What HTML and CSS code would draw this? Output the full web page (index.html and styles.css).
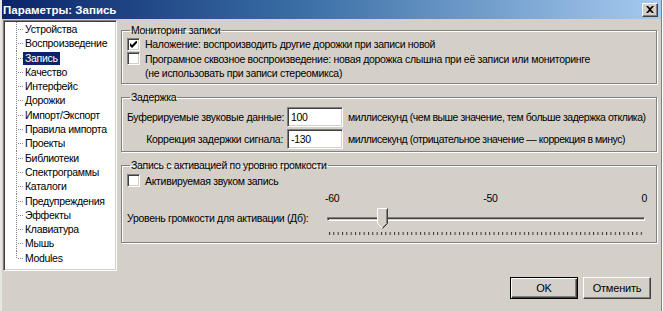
FILE: index.html
```html
<!DOCTYPE html>
<html lang="ru">
<head>
<meta charset="utf-8">
<title>Параметры: Запись</title>
<link rel="stylesheet" href="styles.css">
</head>
<body>
<div class="window">
  <div class="titlebar">
    <span class="title">Параметры: Запись</span>
    <span class="close">
      <svg width="8" height="7" viewBox="0 0 8 7"><path d="M0 0h2l2 2 2-2h2L5 3.5 8 7H6L4 5 2 7H0l3-3.5z" fill="#000"/></svg>
    </span>
  </div>
  <div class="main">
    <ul class="tree">
      <li><span>Устройства</span></li>
      <li><span>Воспроизведение</span></li>
      <li class="sel"><span>Запись</span></li>
      <li><span>Качество</span></li>
      <li><span>Интерфейс</span></li>
      <li><span>Дорожки</span></li>
      <li><span>Импорт/Экспорт</span></li>
      <li><span>Правила импорта</span></li>
      <li><span>Проекты</span></li>
      <li><span>Библиотеки</span></li>
      <li><span>Спектрограммы</span></li>
      <li><span>Каталоги</span></li>
      <li><span>Предупреждения</span></li>
      <li><span>Эффекты</span></li>
      <li><span>Клавиатура</span></li>
      <li><span>Мышь</span></li>
      <li><span>Modules</span></li>
    </ul>
    <div class="content">
      <fieldset class="group g1">
        <legend>Мониторинг записи</legend>
        <div class="row"><span class="cb checked"><svg width="7" height="7" viewBox="0 0 7 7"><path d="M0 2v3l2 2 5-5V-1L2 4z" fill="#000"/></svg></span><span>Наложение: воспроизводить другие дорожки при записи новой</span></div>
        <div class="row"><span class="cb"></span><span>Програмное сквозное воспроизведение: новая дорожка слышна при её записи или мониторинге</span></div>
        <div class="row note">(не использовать при записи стереомикса)</div>
      </fieldset>
      <fieldset class="group g2">
        <legend>Задержка</legend>
        <div class="field"><span class="lbl">Буферируемые звуковые данные:</span><span class="input">100</span><span class="unit">миллисекунд (чем выше значение, тем больше задержка отклика)</span></div>
        <div class="field"><span class="lbl">Коррекция задержки сигнала:</span><span class="input">-130</span><span class="unit">миллисекунд (отрицательное значение — коррекция в минус)</span></div>
      </fieldset>
      <fieldset class="group g3">
        <legend>Запись с активацией по уровню громкости</legend>
        <div class="row"><span class="cb"></span><span>Активируемая звуком запись</span></div>
        <div class="level">
          <span class="level-label">Уровень громкости для активации (Дб):</span>
          <div class="slider">
            <div class="scale"><span>-60</span><span>-50</span><span>0</span></div>
            <div class="track-area">
              <div class="track"></div>
              <svg class="thumb" width="11" height="21" viewBox="0 0 11 21">
                <polygon points="0.5,0.5 10.5,0.5 10.5,15.5 5.5,20.5 0.5,15.5" fill="#d4d0c8"/>
                <polyline points="5.5,20.5 10.5,15.5 10.5,0.5" fill="none" stroke="#404040"/>
                <polyline points="5.5,19.5 9.5,15.5 9.5,1.5" fill="none" stroke="#808080"/>
                <polyline points="0.5,15.5 0.5,0.5 10,0.5" fill="none" stroke="#fff"/>
                <line x1="0.5" y1="15.5" x2="5" y2="20" stroke="#fff"/>
              </svg>
            </div>
            <svg class="ticks" width="314" height="4" viewBox="0 0 314 4">
              <defs>
                <pattern id="tk" width="4.33" height="4" patternUnits="userSpaceOnUse">
                  <rect x="0" y="0" width="1" height="3" fill="#303030"/>
                </pattern>
              </defs>
              <rect x="0" y="0" width="314" height="4" fill="url(#tk)"/>
            </svg>
          </div>
        </div>
      </fieldset>
    </div>
  </div>
  <div class="footer">
    <button class="btn default">OK</button>
    <button class="btn">Отменить</button>
  </div>
</div>
</body>
</html>
```

FILE: styles.css
```css
* { box-sizing: border-box; }
html, body { margin: 0; padding: 0; }
body {
  width: 663px;
  height: 311px;
  overflow: hidden;
  background: #fff;
  font-family: "Liberation Sans", Arial, sans-serif;
  font-size: 10.5px;
  letter-spacing: -0.3px;
  color: #000;
}
.window {
  width: 662px;
  height: 311px;
  background: #d4d0c8;
  border-left: 2px solid #e8e6e2;
  border-right: 1px solid #808080;
  display: flex;
  flex-direction: column;
}
.titlebar {
  height: 19px;
  flex: none;
  display: flex;
  align-items: center;
  justify-content: space-between;
  padding: 0 3px 0 1px;
  background: linear-gradient(to right, #0a246a 0%, #3a6ea5 45%, #a6caf0 100%);
  color: #fff;
}
.title {
  font-weight: bold;
  font-size: 11.5px;
  letter-spacing: 0;
}
.close {
  width: 16px;
  height: 14px;
  background: #d4d0c8;
  border: 1px solid;
  border-color: #fff #404040 #404040 #fff;
  box-shadow: inset -1px -1px 0 #808080;
  display: flex;
  align-items: center;
  justify-content: center;
  padding-bottom: 1px;
}
.main {
  flex: none;
  display: flex;
  padding: 1px 0 0 1px;
}
.tree {
  list-style: none;
  margin: 0;
  width: 114px;
  height: 251px;
  background: #fff;
  border: 1px solid;
  border-color: #808080 #fff #fff #808080;
  box-shadow: inset 1px 1px 0 #404040, inset -1px -1px 0 #d4d0c8;
  padding: 1px 0 0 1px;
}
.tree li {
  position: relative;
  height: 14.3px;
  line-height: 14px;
  padding-left: 18px;
  white-space: nowrap;
}
.tree li::before {
  content: "";
  position: absolute;
  left: 11px;
  top: 0;
  width: 1px;
  height: 100%;
  background: repeating-linear-gradient(to bottom, #808080 0 1px, transparent 1px 2px);
}
.tree li:last-child::before { height: 8px; }
.tree li::after {
  content: "";
  position: absolute;
  left: 12px;
  top: 7px;
  width: 7px;
  height: 1px;
  background: repeating-linear-gradient(to right, transparent 0 1px, #808080 1px 2px);
}
.tree li span {
  display: inline-block;
  padding: 0 2px;
  height: 13px;
  line-height: 13px;
}
.tree li.sel span {
  background: #0a246a;
  color: #fff;
}
.content {
  margin-left: 4px;
  width: 536px;
  display: flex;
  flex-direction: column;
  gap: 7px;
  padding-top: 4px;
}
.group {
  margin: 0;
  padding: 0 5px 2px 5px;
  border: 1px solid #808080;
  box-shadow: 1px 1px 0 #fff, inset 1px 1px 0 #fff;
  min-width: 0;
}
.group legend {
  padding: 0 1px;
  margin-left: 3px;
  line-height: 13px;
}
.row {
  display: flex;
  align-items: center;
  height: 14.5px;
  white-space: nowrap;
}
.row.note { padding-left: 18px; }
.cb {
  width: 13px;
  height: 13px;
  flex: none;
  margin-right: 5px;
  background: #fff;
  border: 1px solid;
  border-color: #808080 #fff #fff #808080;
  box-shadow: inset 1px 1px 0 #404040, inset -1px -1px 0 #d4d0c8;
  display: flex;
  align-items: center;
  justify-content: center;
}
.g2 { padding-top: 3px; padding-bottom: 2px; }
.field {
  display: flex;
  align-items: center;
  height: 20px;
  white-space: nowrap;
}
.field + .field { margin-top: 2px; }
.lbl {
  width: 156px;
  text-align: right;
  flex: none;
}
.unit { letter-spacing: -0.45px; }
.input {
  width: 56px;
  height: 20px;
  flex: none;
  margin: 0 5px 0 4px;
  background: #fff;
  border: 1px solid;
  border-color: #808080 #fff #fff #808080;
  box-shadow: inset 1px 1px 0 #404040, inset -1px -1px 0 #d4d0c8;
  padding: 0 3px;
  line-height: 18px;
}
.g3 { padding-top: 2px; padding-bottom: 6px; }
.level {
  display: flex;
  align-items: flex-start;
  margin-top: 4px;
}
.level-label {
  width: 198px;
  flex: none;
  margin-top: 20px;
  line-height: 13px;
  white-space: nowrap;
}
.slider {
  width: 322px;
  display: flex;
  flex-direction: column;
}
.scale {
  display: flex;
  justify-content: space-between;
  line-height: 13px;
}
.track-area {
  position: relative;
  height: 24px;
}
.track {
  position: absolute;
  left: 2px;
  right: 2px;
  top: 12px;
  height: 4px;
  border: 1px solid;
  border-color: #808080 #fff #fff #808080;
  box-shadow: inset 1px 1px 0 #404040;
}
.thumb {
  position: absolute;
  left: 52px;
  top: 3px;
}
.ticks {
  display: block;
  margin: 3px 0 0 4px;
}
.footer {
  flex: 1;
  display: flex;
  justify-content: flex-end;
  align-items: flex-start;
  gap: 5px;
  padding: 6px 10px 0 0;
}
.btn {
  width: 68px;
  height: 22px;
  font-family: inherit;
  font-size: 11px;
  letter-spacing: -0.2px;
  color: #000;
  background: #d4d0c8;
  border: 1px solid;
  border-color: #fff #404040 #404040 #fff;
  box-shadow: inset -1px -1px 0 #808080;
  padding: 0;
}
.btn.default {
  border: 1px solid #000;
  box-shadow: inset 1px 1px 0 #fff, inset -1px -1px 0 #404040, inset -2px -2px 0 #808080;
}
```
